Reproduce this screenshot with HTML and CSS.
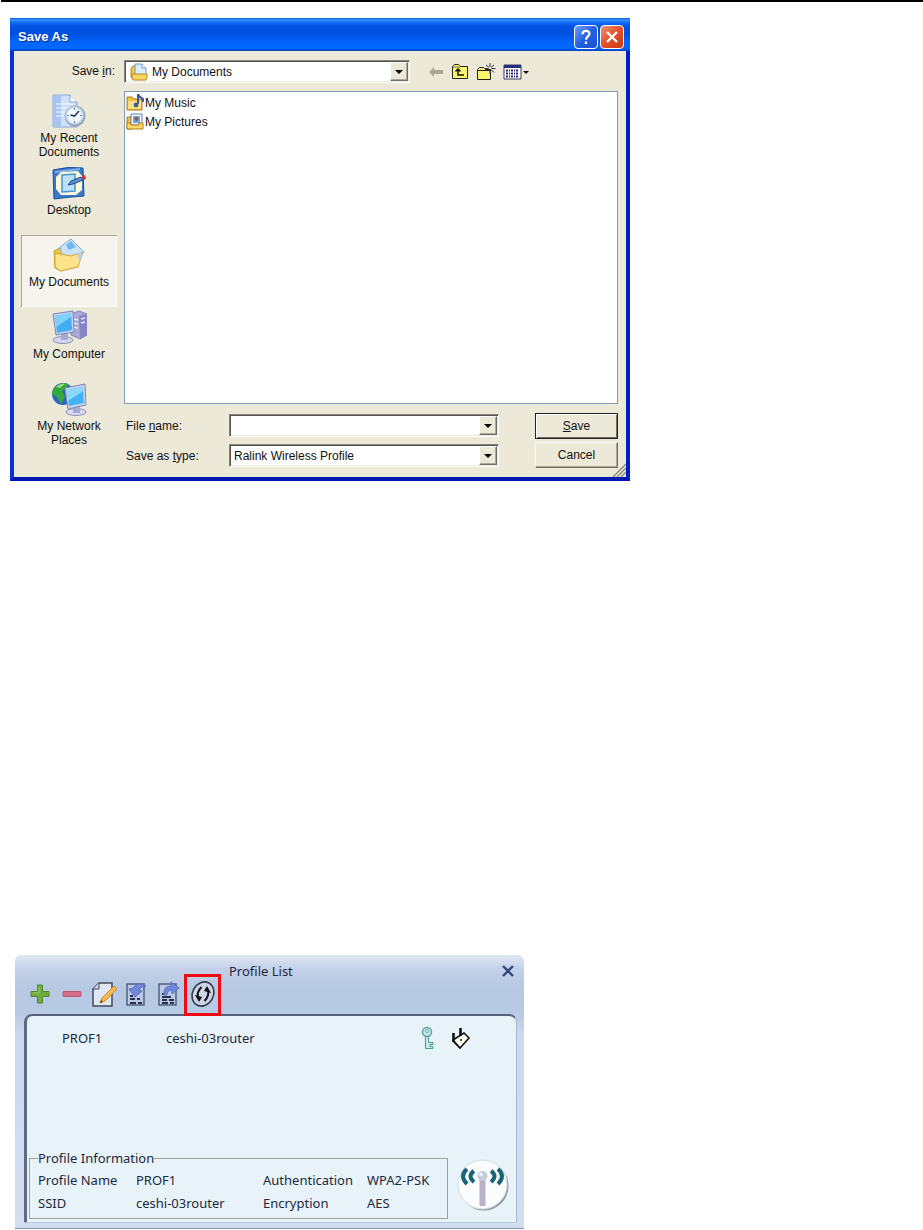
FILE: index.html
```html
<!DOCTYPE html>
<html lang="en">
<head>
    <meta charset="UTF-8">
    <meta name="viewport" content="width=device-width, initial-scale=1.0">
    <title>Save As / Profile List</title>
    <link rel="stylesheet" href="styles.css">
</head>
<body>
    <hr class="rule">

    <form class="dialog">
        <header class="titlebar">
            <h1>Save As</h1>
            <button type="button" class="cap help" aria-label="Help">
                <svg width="20" height="20" viewBox="0 0 20 20"><path d="M6.500 7.200c0-4.400 7-4.400 7-.4 0 2.800-3.500 2.600-3.500 6M10 14.500v2.500" fill="none" stroke="#fff" stroke-width="2.200"/></svg>
            </button>
            <button type="button" class="cap close" aria-label="Close">
                <svg width="20" height="20" viewBox="0 0 20 20"><path d="M5 5l10 10M15 5L5 15" stroke="#fff" stroke-width="2.400"/></svg>
            </button>
        </header>

        <div class="content">
            <label class="look" for="folder">Save <u>i</u>n:</label>
            <div class="top">
                <div class="combo folder">
                    <svg width="18" height="18" viewBox="0 0 18 18">
                        <path d="M1 5l2-2h3v12H2l-1-1z" fill="#f3c747" stroke="#b88a18"/>
                        <path d="M5 1h7l4 4v8H5z" fill="#dceefe" stroke="#6d9ccc"/>
                        <path d="M12 1v4h4" fill="#fff" stroke="#6d9ccc"/>
                        <path d="M2 11h15v4l-1 2H3l-1-2z" fill="#f7d565" stroke="#b88a18"/>
                    </svg>
                    <select id="folder"><option>My Documents</option></select>
                    <span class="arrow"></span>
                </div>
                <div class="tools">
                    <button type="button" aria-label="Back"><svg width="16" height="18" viewBox="0 0 16 18"><path d="M1 9l5-5v3h9v4H6v3z" fill="#aaa798"/></svg></button>
                    <button type="button" aria-label="Up one level"><svg width="18" height="18" viewBox="0 0 18 18">
                        <path d="M1.500 15.500v-12l2-2h4l2 2h7v12z" fill="#fbf56d" stroke="#222"/>
                        <path d="M2 4h7" stroke="#665"/>
                        <path d="M7 6v6h6M4.500 8.500L7 6l2.500 2.500" fill="none" stroke="#111" stroke-width="1.500"/>
                    </svg></button>
                    <button type="button" aria-label="New folder"><svg width="20" height="18" viewBox="0 0 20 18">
                        <path d="M1.500 16.500v-10l2-2h4l2 2h5v10z" fill="#fbf56d" stroke="#222"/>
                        <path d="M1.500 7.500h13" stroke="#222"/>
                        <path d="M14 0v4m0 3v4M8.500 5.500h4m3 0h4M10 2l3 2.500m2 2l3 3M18 2l-3 2.500" stroke="#333"/>
                    </svg></button>
                    <button type="button" aria-label="Views"><svg width="27" height="18" viewBox="0 0 27 18">
                        <path d="M1 2h17v14H1z" fill="#fff" stroke="#39395f"/>
                        <path d="M1 3.500h17" stroke="#24307e" stroke-width="3"/>
                        <path d="M3 7.500h13M3 10.500h13M3 13.500h13" stroke="#24247a" stroke-width="2" stroke-dasharray="2 1 1 1"/>
                        <path d="M20 8h6l-3 3z" fill="#111"/>
                    </svg></button>
                </div>
            </div>

            <nav class="places">
                <button type="button">
                    <svg width="36" height="34" viewBox="0 0 36 34">
                        <path d="M2 1h17l7 7v25H2z" fill="#cfe1f9" stroke="#8aa6d4"/>
                        <path d="M2 1h8v32H2z" fill="#a8c5f2"/>
                        <path d="M19 1v7h7" fill="#fff" stroke="#8aa6d4"/>
                        <path d="M5 10h17M5 14h17M5 18h10M5 22h8" stroke="#f5f9ff"/>
                        <circle cx="24" cy="22" r="10.500" fill="#8b9cb4"/>
                        <circle cx="23.500" cy="21.500" r="8.500" fill="#eef8fc" stroke="#c6d3e2" stroke-width="2"/>
                        <path d="M23.500 14v2M23.500 27v2M16 21.500h2M29 21.500h2" stroke="#6884a8"/>
                        <path d="M28 17l-4.500 5-4-1" fill="none" stroke="#24395d" stroke-width="1.600"/>
                    </svg>
                    <span>My Recent<br>Documents</span>
                </button>
                <button type="button">
                    <svg width="36" height="34" viewBox="0 0 36 34">
                        <path d="M2 4q15-4 30-2l1 28q-15 1-30 3z" fill="#3879ca" stroke="#1c4f9c"/>
                        <path d="M4 6l25-3" stroke="#7fb2ea" stroke-width="2"/>
                        <path d="M10 6l17-1 4 5v14l-6 5H10l-5-6V11z" fill="#fbf8d9"/>
                        <path d="M11 9l13-1v17l-13 1z" fill="#bfe0fa" stroke="#4793d5" stroke-width="1.500"/>
                        <path d="M17 19l3-4 10-4 2 3-10 4z" fill="#5b93cf" stroke="#21477e"/>
                        <path d="M31 10l3-1 1 4-3 1z" fill="#d3303b"/>
                    </svg>
                    <span>Desktop</span>
                </button>
                <button type="button" class="current">
                    <svg width="36" height="34" viewBox="0 0 36 34">
                        <path d="M3 13l8-4 4 3 10-4 2 18-17 7-6-3z" fill="#f2c64c" stroke="#c99a24"/>
                        <path d="M9 9L20 1l13 13-9 13-12-7z" fill="#c9e3fa" stroke="#7fafdd"/>
                        <path d="M15 7l5-4 5 6-7 3z" fill="#74b7ec"/>
                        <path d="M4 15l16 3 12-4-5 15-17 4-6-4z" fill="#ffe38a" stroke="#d4a42f"/>
                        <path d="M27 15l5-1-4 12z" fill="#a9d2ee"/>
                    </svg>
                    <span>My Documents</span>
                </button>
                <button type="button">
                    <svg width="36" height="34" viewBox="0 0 36 34">
                        <path d="M20 4l8-3 8 3v21l-7 4-9-4z" fill="#aaa9da" stroke="#8583ba"/>
                        <path d="M28 6l8-2v21l-7 4z" fill="#8784c3"/>
                        <path d="M22 9l5 1M22 13l5 1M22 17l5 1M30 9l4-1M30 13l4-1" stroke="#e6e5fa" stroke-width="1.500"/>
                        <ellipse cx="12" cy="30" rx="10" ry="3.500" fill="#d6d7ee" stroke="#9090b8"/>
                        <path d="M10 22h7v8h-7z" fill="#a8abd0"/>
                        <path d="M2 4l20-3 1 21-18 3z" fill="#c8d3ef" stroke="#7a86ba"/>
                        <path d="M4 6l16-3 1 17-15 3z" fill="#41adf2"/>
                        <path d="M4 6l16-3v4L5 17z" fill="#80d1fb"/>
                    </svg>
                    <span>My Computer</span>
                </button>
                <button type="button">
                    <svg width="36" height="34" viewBox="0 0 36 34">
                        <circle cx="12" cy="12" r="11" fill="#2867c1"/>
                        <path d="M4 5q8-6 13-3l-2 5-4 2 3 6-4 7-4-7-5-3q0-4 3-7z" fill="#37a83c"/>
                        <path d="M5 5q4-4 9-3l-5 4z" fill="#93df84"/>
                        <ellipse cx="25" cy="30" rx="10" ry="3.500" fill="#d8daef" stroke="#9090b8"/>
                        <path d="M22 23h7v8h-7z" fill="#a5a9d1"/>
                        <path d="M14 6l20-4 1 21-18 4z" fill="#cbd5ee" stroke="#7a86ba"/>
                        <path d="M16 8l16-3 1 16-15 3z" fill="#43b3f4"/>
                        <path d="M16 8l16-3v4L17 19z" fill="#8cd8fc"/>
                    </svg>
                    <span>My Network<br>Places</span>
                </button>
            </nav>

            <div class="main">
                <ul class="files">
                    <li>
                        <svg width="18" height="18" viewBox="0 0 18 18">
                            <path d="M1 3h5l2 2h8v11H1z" fill="#efc24b" stroke="#a87813"/>
                            <path d="M2 7h13v8H2z" fill="#fbe184"/>
                            <path d="M12 0v10M12 0q1 3 5 5v3" fill="none" stroke="#334b91" stroke-width="1.800"/>
                            <circle cx="10" cy="11" r="2.400" fill="#425ca1"/>
                        </svg>
                        My Music
                    </li>
                    <li>
                        <svg width="18" height="18" viewBox="0 0 18 18">
                            <path d="M1 4h5v12H1z" fill="#efc24b" stroke="#a87813"/>
                            <path d="M5 1h11v11H5z" fill="#f8fcff" stroke="#547eb7"/>
                            <path d="M7 3h7v7H7z" fill="#6da9df"/>
                            <circle cx="10.500" cy="6" r="2" fill="#a35243"/>
                            <path d="M1 10h4v2h8v-2h4v6H1z" fill="#f9d86e" stroke="#b28118"/>
                        </svg>
                        My Pictures
                    </li>
                </ul>
                <div class="bottom">
                    <div class="fields">
                        <label for="name">File <u>n</u>ame:</label>
                        <div class="combo">
                            <input id="name" type="text" autocomplete="off">
                            <button type="button" class="arrow" aria-label="Recent names"></button>
                        </div>
                        <label for="type">Save as <u>t</u>ype:</label>
                        <div class="combo">
                            <select id="type"><option>Ralink Wireless Profile</option></select>
                            <span class="arrow"></span>
                        </div>
                    </div>
                    <div class="actions">
                        <button type="button" class="push default"><u>S</u>ave</button>
                        <button type="button" class="push">Cancel</button>
                    </div>
                </div>
            </div>
        </div>
        <svg class="grip" width="14" height="14" viewBox="0 0 14 14"><path d="M1 14L14 1M5 14l9-9M9 14l5-5" stroke="#8f8d80" stroke-width="1.500"/></svg>
    </form>

    <section class="profiles">
        <header class="bar">
            <div class="icons">
                <button type="button" aria-label="Add"><svg width="20" height="20" viewBox="0 0 20 20"><path d="M7.500 1h5v6.500H19v5h-6.500V19h-5v-6.500H1v-5h6.500z" fill="#6fae3e" stroke="#4c8b2e"/><path d="M9 3v6H3" fill="none" stroke="#98cc66"/></svg></button>
                <button type="button" aria-label="Delete"><svg width="20" height="20" viewBox="0 0 20 20"><rect x="1" y="7.500" width="18" height="5" rx="1" fill="#d66e8c" stroke="#b85676"/></svg></button>
                <button type="button" aria-label="Edit"><svg width="26" height="26" viewBox="0 0 26 26">
                    <path d="M2 8l6-6h13v23H2z" fill="#dfe7f3" stroke="#41485b" stroke-width="1.500"/>
                    <path d="M2 8h6V2" fill="#cdd6e5" stroke="#41485b"/>
                    <path d="M9 22l2-5L23 5l3 3-12 12z" fill="#f6b94d" stroke="#d18b2c"/>
                    <path d="M9 22l1-3 2 2z" fill="#514236"/>
                </svg></button>
                <button type="button" aria-label="Import"><svg width="24" height="26" viewBox="0 0 24 26">
                    <path d="M3 3h17v21H3z" fill="#b9c8e4" stroke="#53617c" stroke-width="1.500"/>
                    <path d="M6 15h3M6 18h5M6 22h6M13 18h3M14 22h4" stroke="#29314a" stroke-width="2"/>
                    <path d="M22 5q-8-5-13 2L5 8l6 8 7-6-3-1q2-4 7-4z" fill="#7188d9" stroke="#5a70c4"/>
                </svg></button>
                <button type="button" aria-label="Export"><svg width="24" height="26" viewBox="0 0 24 26">
                    <path d="M3 3h17v21H3z" fill="#b9c8e4" stroke="#53617c" stroke-width="1.500"/>
                    <path d="M6 13h3M6 16h9M6 19h5M6 22h6M13 19h5M14 22h4" stroke="#29314a" stroke-width="2"/>
                    <path d="M8 14q-1-9 7-9V1l8 6-7 6V9q-5 0-5 5z" fill="#7188d9" stroke="#5a70c4"/>
                </svg></button>
                <button type="button" class="wps" aria-label="WPS"><svg width="26" height="28" viewBox="0 0 26 28">
                    <ellipse cx="13" cy="14" rx="10.500" ry="12.500" transform="rotate(28 13 14)" fill="#cbd5e6" stroke="#343b49" stroke-width="1.600"/>
                    <path d="M11.500 7q-5 5-3.500 11" fill="none" stroke="#111" stroke-width="2"/>
                    <path d="M5 15l7 2-3 5z" fill="#111"/>
                    <path d="M14.500 21q5-5 3.500-11" fill="none" stroke="#111" stroke-width="2"/>
                    <path d="M14 11l3-5 4 7z" fill="#111"/>
                </svg></button>
            </div>
            <h2>Profile List</h2>
            <button type="button" class="dismiss" aria-label="Close"><svg width="14" height="14" viewBox="0 0 14 14"><path d="M2 2l10 10M12 2L2 12" stroke="#34457c" stroke-width="2.400"/></svg></button>
        </header>

        <div class="panel">
            <div class="list">
                <div class="row">
                    <span>PROF1</span>
                    <span>ceshi-03router</span>
                    <svg width="14" height="24" viewBox="0 0 14 24">
                        <circle cx="6" cy="6" r="4.500" fill="#c9e9e7" stroke="#5ba6a4" stroke-width="1.500"/>
                        <circle cx="6" cy="5" r="1.500" fill="#fff" stroke="#5ba6a4"/>
                        <path d="M4.500 10.500h3v6H12v2H9v2h3v2H4.500z" fill="#c9e9e7" stroke="#4a9a98"/>
                    </svg>
                    <svg width="20" height="24" viewBox="0 0 20 24">
                        <path d="M2 14l11-7 5 5-9 10z" fill="#fffef0" stroke="#111" stroke-width="1.500"/>
                        <path d="M2.500 7v9M9.500 2v8" stroke="#111" stroke-width="2.600"/>
                        <path d="M2 15l7 7M9 14h2" stroke="#111" stroke-width="1.500"/>
                    </svg>
                </div>
            </div>
            <div class="foot">
                <fieldset class="info">
                    <legend>Profile Information</legend>
                    <dl>
                        <dt>Profile Name</dt><dd>PROF1</dd>
                        <dt>Authentication</dt><dd>WPA2-PSK</dd>
                        <dt>SSID</dt><dd>ceshi-03router</dd>
                        <dt>Encryption</dt><dd>AES</dd>
                    </dl>
                </fieldset>
                <button type="button" class="radio" aria-label="Wireless radio"><svg width="52" height="52" viewBox="0 0 52 52">
                    <circle cx="27" cy="27" r="24.500" fill="#8e9aa5"/>
                    <circle cx="25.500" cy="25.500" r="24.500" fill="#fbfcfd" stroke="#d2dce4"/>
                    <path d="M22.500 19h6v28h-6z" fill="#b9b1c6"/>
                    <circle cx="25.500" cy="17" r="5" fill="#c0cbdc"/>
                    <circle cx="24" cy="15.500" r="2" fill="#edf3f8"/>
                    <path d="M10 10q-8 7 0 15M17 12q-7 5 0 11M41 10q8 7 0 15M34 12q7 5 0 11" fill="none" stroke="#176477" stroke-width="4"/>
                </svg></button>
            </div>
        </div>
    </section>
</body>
</html>
```

FILE: styles.css
```css
* {
    box-sizing: border-box;
    margin: 0;
    padding: 0;
}

body {
    background: #fff;
    color: #111;
    font: 12px/14px "Liberation Sans", Arial, sans-serif;
}

button, input, select {
    font: inherit;
    color: inherit;
    background: none;
    border: none;
}

svg {
    display: block;
    flex: none;
}

.rule {
    height: 2px;
    margin-left: 1px;
    border: none;
    background: #000;
}

/* save dialog */

.dialog {
    position: relative;
    max-width: 620px;
    margin: 16px 10px 0;
    background: #2c6fe6;
    border: 4px solid;
    border-top: none;
    border-color: #0831d9 #001dc0 #0019b5 #0831d9;
}

.titlebar {
    display: flex;
    align-items: center;
    gap: 2px;
    height: 33px;
    margin: 0 -4px;
    padding: 4px 6px 0 8px;
    background: linear-gradient(#0a58dc 0, #3d95ff 2px, #1470f5 4px, #0453e3 8px, #0050e0 16px, #0365fb 24px, #0468ff 30px, #0041c4 33px);
}

.titlebar h1 {
    flex: 1;
    color: #fff;
    font-size: 13px;
    line-height: 18px;
    text-shadow: 1px 1px #0a2f8a;
}

.cap {
    width: 24px;
    height: 24px;
    padding: 1px;
    border: 1px solid #fff;
    border-radius: 4px;
}

.help {
    background: linear-gradient(135deg, #6f9cf5, #2560e0 50%, #1d52d2);
}

.close {
    background: linear-gradient(135deg, #f09578, #e2502a 50%, #c93a10);
}

.content {
    display: grid;
    grid-template-columns: 96px 1fr;
    gap: 8px 7px;
    padding: 9px 8px 9px 7px;
    background: #ece9d8;
}

.look {
    padding-right: 2px;
    text-align: right;
    line-height: 23px;
}

.top {
    display: flex;
    align-items: center;
}

.combo {
    position: relative;
    display: flex;
    height: 23px;
    background: #fff;
    border: 1px solid;
    border-color: #85837a #fff #fff #85837a;
    box-shadow: inset 1px 1px #55534b, inset -1px -1px #ece9d8;
}

.combo input,
.combo select {
    flex: 1;
    min-width: 0;
    padding: 0 20px 0 4px;
    appearance: none;
    outline: none;
}

.folder {
    flex: 0 1 286px;
    align-items: center;
    padding-left: 5px;
}

.arrow {
    position: absolute;
    top: 1px;
    right: 1px;
    display: grid;
    place-items: center;
    width: 18px;
    height: 19px;
    background: #ece9d8;
    border: 1px solid;
    border-color: #fff #716f64 #716f64 #fff;
    box-shadow: inset -1px -1px #aca899;
}

span.arrow {
    pointer-events: none;
}

.arrow::before {
    content: "";
    width: 0;
    height: 0;
    border: 4px solid transparent;
    border-top-color: #000;
    border-bottom: none;
}

.tools {
    display: flex;
    gap: 7px;
    margin-left: 18px;
}

.places {
    display: flex;
    flex-direction: column;
}

.places button {
    display: flex;
    flex-direction: column;
    align-items: center;
    gap: 3px;
    min-height: 72px;
    padding-top: 3px;
}

.places .current {
    background: #f6f4ec;
    box-shadow: inset 1px 1px #aca899, inset -1px -1px #fff;
}

.files {
    min-height: 313px;
    padding: 1px;
    background: #fff;
    border: 1px solid #7f9db9;
    list-style: none;
}

.files li {
    display: flex;
    align-items: center;
    gap: 1px;
    height: 19px;
}

.bottom {
    display: flex;
    justify-content: space-between;
    gap: 20px;
    margin-top: 9px;
}

.fields {
    display: grid;
    grid-template-columns: 105px minmax(0, 270px);
    flex: 0 1 375px;
    align-content: start;
    align-items: center;
    gap: 7px 0;
    padding-top: 1px;
}

.fields label {
    padding-left: 2px;
}

.actions {
    display: flex;
    flex-direction: column;
    gap: 3px;
    width: 83px;
}

.push {
    height: 26px;
    background: #ece9d8;
    border: 1px solid;
    border-color: #fff #716f64 #716f64 #fff;
    box-shadow: inset -1px -1px #aca899;
}

.push.default {
    border-color: #222;
    box-shadow: inset 1px 1px #fff, inset -1px -1px #716f64;
}

.grip {
    position: absolute;
    right: 0;
    bottom: 0;
}

/* wireless profile list */

.profiles {
    max-width: 509px;
    margin: 474px 15px 0;
    padding: 0 7px 5px 9px;
    color: #23283c;
    font: 13px/18px "Noto Sans", Tahoma, sans-serif;
    background: linear-gradient(#dfe8f4 0, #c3d1e8 14px, #b7c8e3 34px, #b9cae5 60px, #ccd9ee 80px, #d3def0);
    border-bottom: 1px solid #8793a8;
    border-radius: 6px 6px 0 0;
}

.bar {
    display: flex;
    align-items: flex-start;
    padding-top: 7px;
}

.icons {
    position: relative;
    display: flex;
    margin: 12px 0 -2px;
}

.icons button {
    display: grid;
    place-items: center;
    width: 32px;
    height: 42px;
    padding-bottom: 2px;
}

.icons .wps {
    width: 37px;
    border: 3px solid #f00a14;
}

.bar h2 {
    flex: 1;
    margin-left: 8px;
    font-size: 13px;
    font-weight: normal;
}

.dismiss {
    padding: 2px;
}

.panel {
    padding: 0 5px 3px 2px;
    background: #e7f3f9;
    border: solid;
    border-width: 2px 1px 1px 3px;
    border-color: #55647c #a9b8cf #b9c7dc #5d6b82;
    border-radius: 8px 8px 2px 2px;
}

.list {
    min-height: 134px;
    padding: 10px 0 0 33px;
}

.row {
    display: grid;
    grid-template-columns: 104px 255px 30px 20px;
    align-items: center;
}

.foot {
    display: flex;
    align-items: center;
    gap: 9px;
}

.info {
    flex: 0 1 419px;
    min-width: 0;
    padding: 3px 8px;
    border: 1px solid #9da59a;
}

.info legend {
    line-height: 16px;
}

.info dl {
    display: grid;
    grid-template-columns: 98px 127px 104px auto;
    line-height: 23px;
}
```
